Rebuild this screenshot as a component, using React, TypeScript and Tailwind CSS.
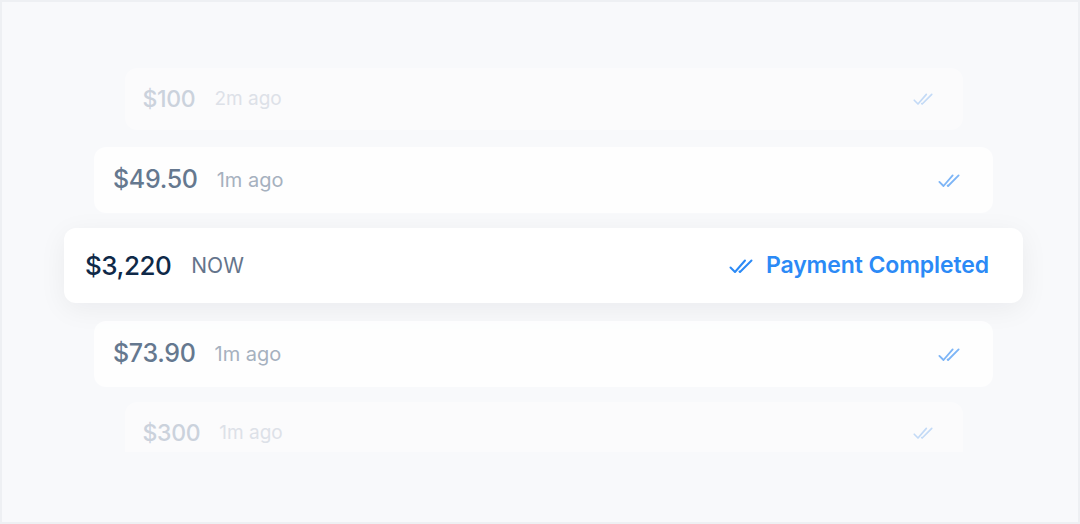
import { CSSProperties } from "react";

// Icono de doble check
function DoubleCheck({ className }: { className?: string }) {
    return (
        <svg viewBox="0 0 24 16" fill="none" stroke="currentColor" strokeWidth={2} strokeLinecap="round" strokeLinejoin="round" className={className}>
            <path d="M1.5 9.5 6 14 16 2.5" />
            <path d="M10.5 13.5 11 14 22.5 2.5" />
        </svg>
    );
}

type Row = {
    amount: string;
    time: string;
    box: string;
    amountCls: string;
    timeCls: string;
    checkCls: string;
};

const faded = {
    box: "w-[838px] h-[62px] pl-[18px] pr-[30px] bg-white/40",
    amountCls: "text-[23px] text-[#cbd2dc]",
    timeCls: "text-[19px] text-[#dde1e8] ml-[19px]",
    checkCls: "w-[20px] h-[14px] text-[#c3daf6]",
};

const near = {
    box: "w-[899px] h-[66px] pl-[19px] pr-[33px] bg-white/80",
    amountCls: "text-[25px] text-[#65788f]",
    timeCls: "text-[20px] text-[#a6b1bf] ml-[19px]",
    checkCls: "w-[22px] h-[15px] text-[#7db5f6]",
};

function ListRow({ r, className = "" }: { r: Row; className?: string }) {
    return (
        <div className={`shrink-0 flex items-center rounded-xl ${r.box} ${className}`}>
            <span className={`font-medium tracking-[-0.3px] ${r.amountCls}`}>{r.amount}</span>
            <span className={r.timeCls}>{r.time}</span>
            <DoubleCheck className={`ml-auto ${r.checkCls}`} />
        </div>
    );
}

export default function App() {
    const font: CSSProperties = { fontFamily: 'Inter, "Noto Sans", sans-serif' };

    return (
        <div style={font} className="w-full h-[524px] border-2 border-[#eef0f3] bg-[#f8f9fb] overflow-hidden">
            <div className="h-[384px] mt-[66px] pl-[7px] flex flex-col items-center overflow-hidden">
                <ListRow r={{ ...faded, amount: "$100", time: "2m ago" }} />
                <ListRow r={{ ...near, amount: "$49.50", time: "1m ago" }} className="mt-[17px]" />

                {/* fila activa */}
                <div className="shrink-0 mt-[15px] w-[959px] h-[75px] flex items-center rounded-xl bg-white pl-[21px] pr-[34px] shadow-[0_6px_28px_rgba(15,23,42,0.06)]">
                    <span className="font-medium text-[26px] tracking-[-0.5px] text-[#0f2948]">$3,220</span>
                    <span className="ml-[20px] text-[21px] text-[#64748b]">NOW</span>
                    <div className="ml-auto flex items-center gap-[13px] text-[#2b8af6]">
                        <DoubleCheck className="w-[24px] h-[16px]" />
                        <span className="text-[23px] font-semibold tracking-[-0.1px]">Payment Completed</span>
                    </div>
                </div>

                <ListRow r={{ ...near, amount: "$73.90", time: "1m ago" }} className="mt-[18px]" />
                <ListRow r={{ ...faded, amount: "$300", time: "1m ago" }} className="mt-[15px]" />
            </div>
        </div>
    );
}
